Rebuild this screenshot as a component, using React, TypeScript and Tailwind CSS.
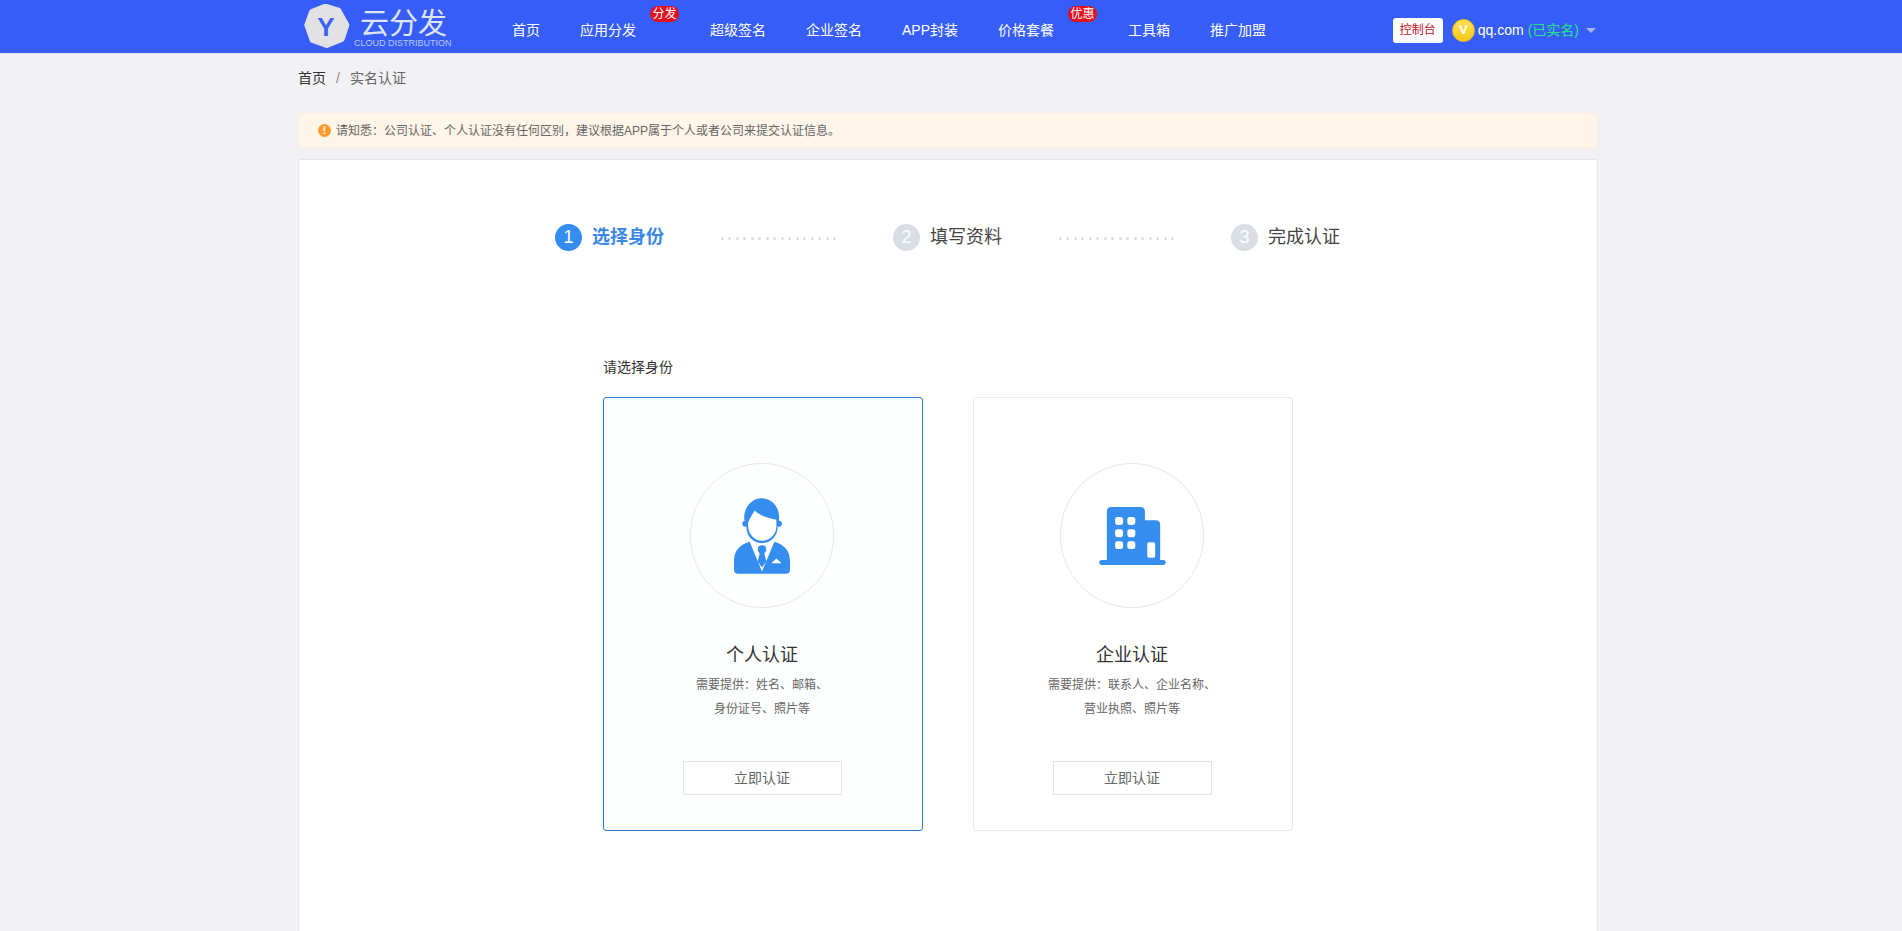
import React from "react";

const navItems: { label: string; badge?: string }[] = [
  { label: "首页" },
  { label: "应用分发", badge: "分发" },
  { label: "超级签名" },
  { label: "企业签名" },
  { label: "APP封装" },
  { label: "价格套餐", badge: "优惠" },
  { label: "工具箱" },
  { label: "推广加盟" },
];

function Logo() {
  return (
    <div className="relative h-[53px] w-[208px] shrink-0">
      <svg width="46" height="44" viewBox="43 12 136 132" className="absolute left-0 top-[4px]">
        <polygon
          points="106,20 145,32 169,75 155,117 110,135 68,120 52,75 66,36"
          fill="#e2e2e4"
          stroke="#e2e2e4"
          strokeWidth="18"
          strokeLinejoin="round"
        />
        <text x="108" y="107" textAnchor="middle" fontSize="78" fontWeight="700" fill="#3a62f0" fontFamily="Liberation Sans, sans-serif">
          Y
        </text>
      </svg>
      <span className="absolute left-[56px] top-[4px] text-[29px] leading-[40px] whitespace-nowrap text-[#dfe5f7]">云分发</span>
      <span className="absolute left-[50px] top-[37px] text-[9px] leading-[12px] whitespace-nowrap text-[#bccaf6]">
        CLOUD DISTRIBUTION
      </span>
    </div>
  );
}

function PersonIcon() {
  return (
    <svg width="56" height="76" viewBox="435 325 168 227">
      <circle cx="469" cy="402" r="9" fill="#368df0" />
      <circle cx="570" cy="402" r="9" fill="#368df0" />
      <path
        d="M466 390C462 352 490 325 517 325C548 325 574 350 570 392L566 410C566 440 545 460 519 460C493 460 472 440 472 410Z"
        fill="#368df0"
      />
      <path
        d="M477 405C477 392 486 382 497 362C512 378 540 385 562 390L562 410C562 435 540 453 519 453C498 453 477 435 477 405Z"
        fill="#fff"
      />
      <path
        d="M482 456C450 465 435 485 435 515L435 540Q435 552 447 552L591 552Q603 552 603 540L603 515C603 485 588 465 556 456L519 545Z"
        fill="#368df0"
      />
      <path d="M508 470Q519 462 530 470L532 482L526 491L532 515L519 533L506 515L512 491L506 482Z" fill="#368df0" />
      <path d="M547 520L562 506L578 520Z" fill="#fff" />
    </svg>
  );
}

function BuildingIcon() {
  return (
    <svg width="67" height="58" viewBox="417 350 201 175">
      <path d="M440 515L440 364Q440 350 454 350L541 350Q555 350 555 364L555 390L587 390Q601 390 601 404L601 515Z" fill="#368df0" />
      <rect x="417" y="510" width="201" height="15" rx="7.5" fill="#368df0" />
      {[380, 417, 453].map((y) =>
        [465, 502].map((x) => <rect key={`${x}-${y}`} x={x} y={y} width="24" height="24" rx="7" fill="#fff" />)
      )}
      <rect x="562" y="456" width="24" height="47" rx="5" fill="#fff" />
    </svg>
  );
}

function Step({ n, label, active }: { n: number; label: string; active?: boolean }) {
  return (
    <div className="flex items-center gap-[10px]">
      <span
        className={
          active
            ? "flex h-[27px] w-[27px] items-center justify-center rounded-full bg-[#368df0] text-[18px] font-normal text-white"
            : "flex h-[27px] w-[27px] items-center justify-center rounded-full bg-[#d9dde4] text-[18px] font-normal text-white"
        }
      >
        {n}
      </span>
      <span className={active ? "text-[18px] leading-[27px] font-bold text-[#3b87e8]" : "text-[18px] leading-[27px] text-[#444]"}>{label}</span>
    </div>
  );
}

function Dots() {
  return (
    <div className="mx-[56.5px] flex w-[116px] justify-between pt-[2px]">
      {Array.from({ length: 16 }).map((_, i) => (
        <span key={i} className="h-[3px] w-[3px] rounded-full bg-[#d9dde4]" />
      ))}
    </div>
  );
}

function IdCard({
  active,
  icon,
  title,
  lines,
}: {
  active?: boolean;
  icon: React.ReactNode;
  title: string;
  lines: string[];
}) {
  return (
    <div
      className={
        active
          ? "flex h-[434px] w-[320px] flex-col items-center rounded-[3px] border border-[#2f7cc8] bg-[#fdfefe] pt-[65px] pr-[2px]"
          : "flex h-[434px] w-[320px] flex-col items-center rounded-[3px] border border-[#e8e8ea] bg-white pt-[65px] pr-[2px]"
      }
    >
      <div className="flex h-[145px] w-[144px] items-center justify-center rounded-full border border-[#e8e8e8] pt-[1px]">{icon}</div>
      <div className="mt-[33px] text-[18px] leading-[28px] text-[#333]">{title}</div>
      <div className="mt-[4px] text-center text-[12px] leading-[24px] text-[#666]">
        {lines.map((l) => (
          <div key={l}>{l}</div>
        ))}
      </div>
      <button className="mt-[40px] h-[34px] w-[159px] border border-[#e4e4e4] bg-white text-[14px] text-[#666]">立即认证</button>
    </div>
  );
}

export default function App() {
  return (
    <div className="flex h-screen flex-col overflow-hidden bg-[#f2f1f4] [font-family:'Liberation_Sans','Noto_Sans_CJK_SC',sans-serif]">
      <header className="flex h-[53px] shrink-0 items-start bg-[#365df8] pl-[304px] pr-[306px] shadow-[0_1px_2px_rgba(0,0,0,0.08)]">
        <Logo />
        <nav className="flex h-[53px] items-center gap-10 pt-[7px] text-[14px] text-white">
          {navItems.map((item) => (
            <div key={item.label} className={item.badge ? "relative mr-[34px] whitespace-nowrap" : "whitespace-nowrap"}>
              {item.label}
              {item.badge && (
                <span className="absolute left-[70px] top-[-14px] flex h-[16px] w-[29px] items-center justify-center rounded-full bg-[#e3101f] text-[12px] text-white">
                  {item.badge}
                </span>
              )}
            </div>
          ))}
        </nav>
        <div className="ml-auto flex h-[53px] items-center pt-[7px]">
          <span className="flex h-[25px] w-[50px] items-center justify-center rounded-[3px] bg-white text-[12px] text-[#c2101c]">控制台</span>
          <span className="ml-[9px] flex h-[23px] w-[23px] items-center justify-center rounded-full border border-[#f2b90f] bg-linear-to-b from-[#ffe14d] to-[#f8c818] text-[13px] font-bold text-white">
            V
          </span>
          <span className="ml-[3px] whitespace-nowrap text-[14px] text-white">qq.com</span>
          <span className="ml-[4px] whitespace-nowrap text-[14px] text-[#27e38c]">(已实名)</span>
          <span className="ml-[7px] h-0 w-0 border-x-[5.5px] border-t-[5px] border-x-transparent border-t-[#aab6ea]" />
        </div>
      </header>

      <main className="ml-[298px] flex w-[1300px] flex-1 flex-col">
        <div className="mt-[15px] flex h-[20px] items-center text-[14px]">
          <span className="text-[#333]">首页</span>
          <span className="mx-[10px] text-[#888]">/</span>
          <span className="text-[#666]">实名认证</span>
        </div>
        <div className="mt-[25px] flex h-[35px] items-center gap-[5px] rounded-[2px] border border-[#fbf0e0] bg-[#fff5e9] pl-[19px] text-[12px] text-[#666]">
          <span className="flex h-[13px] w-[13px] items-center justify-center rounded-full bg-[#ff9a2e] text-[10px] font-bold leading-none text-white">!</span>
          请知悉：公司认证、个人认证没有任何区别，建议根据APP属于个人或者公司来提交认证信息。
        </div>
        <section className="mt-[11px] flex-1 rounded-t-[3px] border border-b-0 border-[#e6e6e9] bg-white pt-[64px]">
          <div className="flex items-center justify-center pr-[1px]">
            <Step n={1} label="选择身份" active />
            <Dots />
            <Step n={2} label="填写资料" />
            <Dots />
            <Step n={3} label="完成认证" />
          </div>
          <div className="mx-auto mt-[106px] w-[690px]">
            <div className="text-[14px] leading-[20px] text-[#333]">请选择身份</div>
            <div className="mt-[20px] flex gap-[50px]">
              <IdCard active icon={<PersonIcon />} title="个人认证" lines={["需要提供：姓名、邮箱、", "身份证号、照片等"]} />
              <IdCard icon={<BuildingIcon />} title="企业认证" lines={["需要提供：联系人、企业名称、", "营业执照、照片等"]} />
            </div>
          </div>
        </section>
      </main>
    </div>
  );
}
